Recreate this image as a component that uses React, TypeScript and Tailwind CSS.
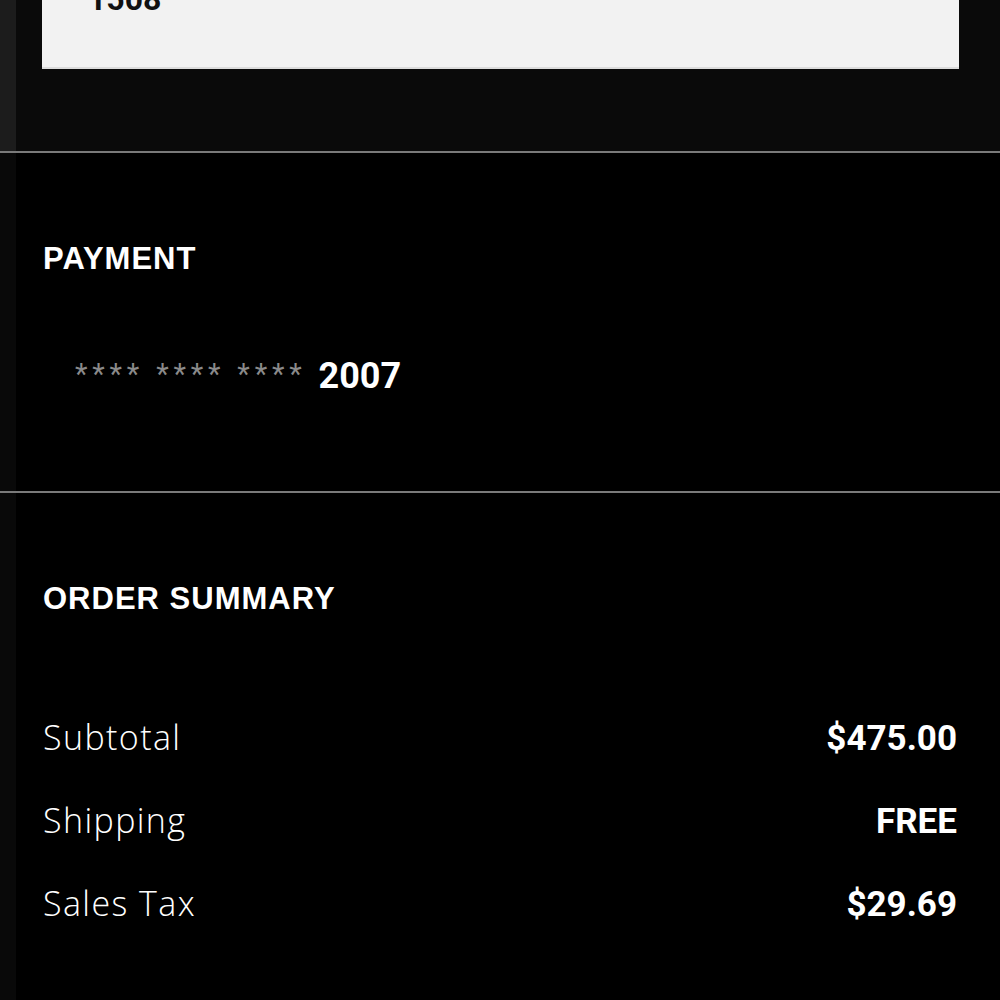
const heading = "font-['Liberation_Sans',Arial,sans-serif] text-[31px] font-bold leading-none tracking-[1px] text-white";
const label = "font-['Open_Sans',sans-serif] text-[34px] font-light leading-none tracking-[1.4px] text-white";
const value = "font-['Roboto',sans-serif] text-[35px] font-bold leading-none text-white";

const summary = [
  { label: "Subtotal", value: "$475.00" },
  { label: "Shipping", value: "FREE" },
  { label: "Sales Tax", value: "$29.69" },
];

function Divider() {
  return <div className="h-[2px] w-full bg-[#7a7a7a]" />;
}

export default function App() {
  return (
    <div className="h-[1000px] w-[1000px] overflow-hidden bg-black">
      <div className="flex h-[151px] bg-[#0a0a0a]">
        <div className="w-[16px] bg-[#1c1c1c]" />
        <div className="flex-1 pl-[26px] pr-[41px]">
          <div className="h-[69px] overflow-hidden border-b-2 border-[#dcdcdc] bg-[#f2f2f2]">
            <div className="mt-[-17px] pl-[46px] font-['Roboto',sans-serif] text-[32px] font-bold leading-[32px] text-[#111]">
              1508
            </div>
          </div>
        </div>
      </div>
      <Divider />

      <section className="flex h-[338px]">
        <div className="w-[16px] bg-[#090909]" />
        <div className="flex-1 pl-[27px] pt-[90px]">
          <h2 className={heading}>PAYMENT</h2>
          <div className="mt-[84px] flex items-start pl-[32px]">
            <div className="flex gap-[12px] pt-[2px] font-['Roboto',sans-serif] text-[29px] leading-none text-[#8a8a8a]">
              <span className="tracking-[4.8px]">****</span>
              <span className="tracking-[4.8px]">****</span>
              <span className="tracking-[4.8px]">****</span>
            </div>
            <span className="ml-[12px] font-['Roboto',sans-serif] text-[36px] font-bold leading-none text-white">
              2007
            </span>
          </div>
        </div>
      </section>
      <Divider />

      <section className="flex h-[507px]">
        <div className="w-[16px] bg-[#090909]" />
        <div className="flex-1 pl-[27px] pr-[43px] pt-[90px]">
          <h2 className={heading}>ORDER SUMMARY</h2>
          <div className="mt-[106px] flex flex-col gap-[47px]">
            {summary.map((row) => (
              <div key={row.label} className="flex items-baseline justify-between">
                <span className={label}>{row.label}</span>
                <span className={value}>{row.value}</span>
              </div>
            ))}
          </div>
        </div>
      </section>
    </div>
  );
}
